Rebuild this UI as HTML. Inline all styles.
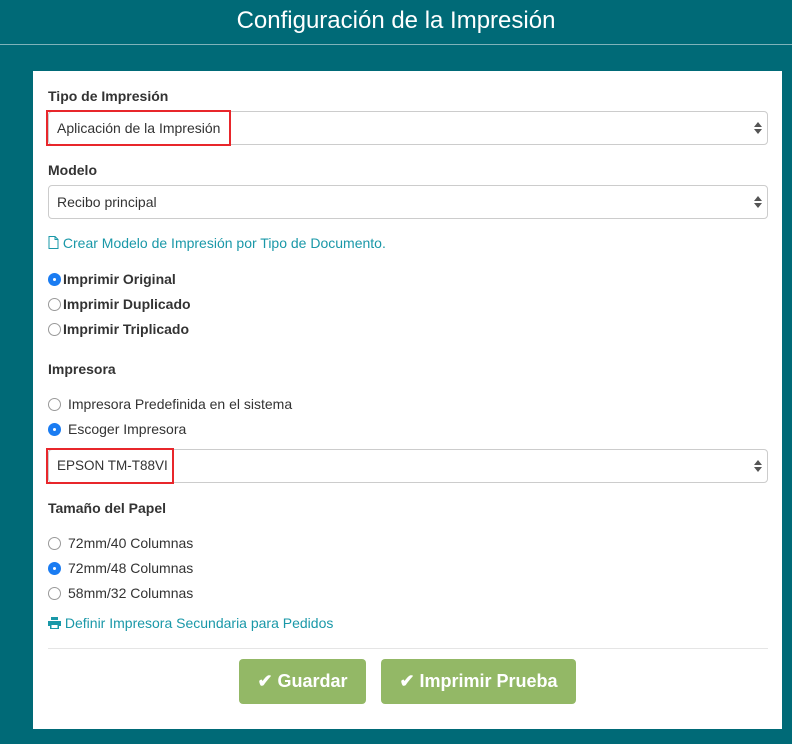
<!DOCTYPE html>
<html><head><meta charset="utf-8"><style>
*{box-sizing:border-box;margin:0;padding:0}
body{width:792px;height:744px;background:#006a77;font-family:"Liberation Sans",sans-serif;position:relative;overflow:hidden;color:#333;font-size:14px}
.hdr{position:absolute;left:0;top:0;width:792px;height:45px;border-bottom:1px solid #7fb3ba;color:#fff;font-size:24px;text-align:center;line-height:42px}
.panel{position:absolute;left:33px;top:71px;width:749px;height:658px;background:#fff}
.a{position:absolute;white-space:nowrap}
.lbl{font-weight:bold;font-size:14px;color:#333}
.sel{position:absolute;left:15px;width:720px;height:34px;border:1px solid #ccc;border-radius:4px;background:#fff;padding-left:8px;line-height:32px;font-size:14px;color:#333}
.sel .ar{position:absolute;right:5px;top:10px;width:8px;height:12px}
.red{position:absolute;border:2px solid #e8262b}
.r{position:absolute;width:13px;height:13px;border-radius:50%;border:1px solid #999;background:#fff}
.r.on{background:#1a7cf2;border-color:#1a7cf2}
.r.on::after{content:"";position:absolute;left:4px;top:4px;width:3px;height:3px;border-radius:50%;background:#fff}
.link{color:#1a98a8;font-size:14px}
.btn{position:absolute;top:588px;height:45px;background:#93b866;border-radius:4px;color:#fff;font-size:18px;font-weight:bold;line-height:45px;text-align:center}
</style></head><body>
<div class="hdr">Configuración de la Impresión</div>
<div class="panel">
<div class="a lbl" style="left:15px;top:17px">Tipo de Impresión</div>
<div class="sel" style="top:40px">Aplicación de la Impresión<svg class="ar" viewBox="0 0 8 12"><path d="M4 0L8 5H0z M4 12L8 7H0z" fill="#555"/></svg></div>
<div class="red" style="left:13px;top:39px;width:185px;height:36px"></div>
<div class="a lbl" style="left:15px;top:91px">Modelo</div>
<div class="sel" style="top:114px">Recibo principal<svg class="ar" viewBox="0 0 8 12"><path d="M4 0L8 5H0z M4 12L8 7H0z" fill="#555"/></svg></div>
<div class="a link" style="left:15px;top:164px"><svg width="11" height="13" viewBox="0 0 11 13" style="vertical-align:-1px"><path d="M1 .5h6l3 3v9H1z M7 .5v3h3" fill="none" stroke="#1a98a8"/></svg> Crear Modelo de Impresión por Tipo de Documento.</div>
<div class="r on" style="left:15px;top:202px"></div><div class="a lbl" style="left:30px;top:200px">Imprimir Original</div>
<div class="r" style="left:15px;top:227px"></div><div class="a lbl" style="left:30px;top:225px">Imprimir Duplicado</div>
<div class="r" style="left:15px;top:252px"></div><div class="a lbl" style="left:30px;top:250px">Imprimir Triplicado</div>
<div class="a lbl" style="left:15px;top:290px">Impresora</div>
<div class="r" style="left:15px;top:327px"></div><div class="a" style="left:35px;top:325px">Impresora Predefinida en el sistema</div>
<div class="r on" style="left:15px;top:352px"></div><div class="a" style="left:35px;top:350px">Escoger Impresora</div>
<div class="sel" style="top:378px;font-size:13.5px">EPSON TM-T88VI<svg class="ar" viewBox="0 0 8 12"><path d="M4 0L8 5H0z M4 12L8 7H0z" fill="#555"/></svg></div>
<div class="red" style="left:13px;top:377px;width:128px;height:36px"></div>
<div class="a lbl" style="left:15px;top:429px">Tamaño del Papel</div>
<div class="r" style="left:15px;top:466px"></div><div class="a" style="left:35px;top:464px">72mm/40 Columnas</div>
<div class="r on" style="left:15px;top:491px"></div><div class="a" style="left:35px;top:489px">72mm/48 Columnas</div>
<div class="r" style="left:15px;top:516px"></div><div class="a" style="left:35px;top:514px">58mm/32 Columnas</div>
<div class="a link" style="left:15px;top:544px"><svg width="13" height="12" viewBox="0 0 13 12" style="vertical-align:-1px"><path d="M3 0h7v3H3z M0 4h13v5h-2v3H2V9H0z" fill="#1a98a8"/><path d="M3.5 8h6v3h-6z" fill="#fff"/></svg> Definir Impresora Secundaria para Pedidos</div>
<div style="position:absolute;left:15px;top:577px;width:720px;border-top:1px solid #e5e5e5"></div>
<div class="btn" style="left:206px;width:127px">✔ Guardar</div>
<div class="btn" style="left:348px;width:195px">✔ Imprimir Prueba</div>
</div>
</body></html>
